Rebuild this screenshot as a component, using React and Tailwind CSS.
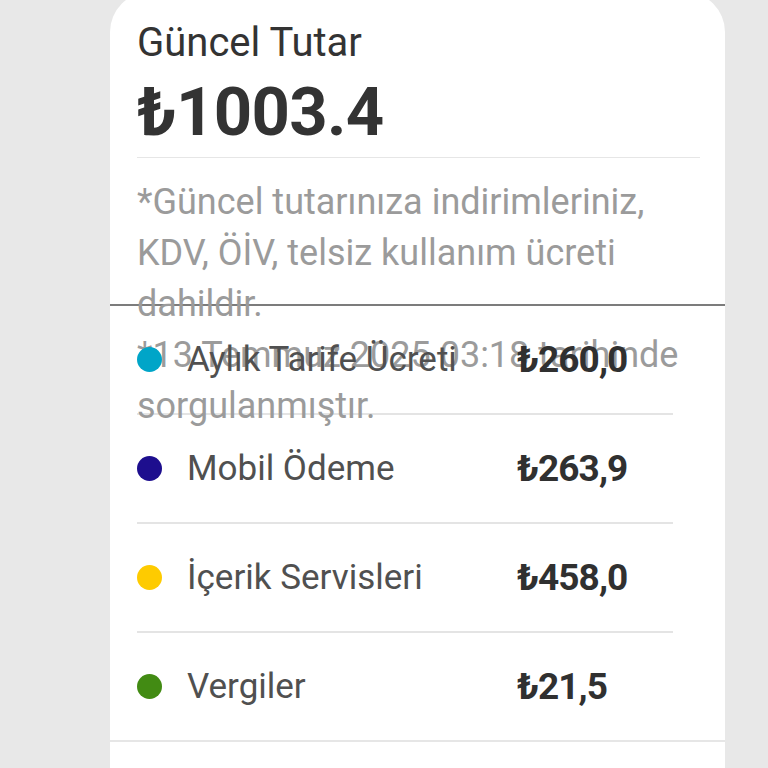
import React from 'react'

const items = [
  { label: 'Aylık Tarife Ücreti', amount: '₺260,0', color: 'bg-[#00a5c8]' },
  { label: 'Mobil Ödeme', amount: '₺263,9', color: 'bg-[#1d0e8e]' },
  { label: 'İçerik Servisleri', amount: '₺458,0', color: 'bg-[#fecb00]' },
  { label: 'Vergiler', amount: '₺21,5', color: 'bg-[#428b13]' },
]

function Row({ label, amount, color, last }) {
  return (
    <div className={`flex items-center ${last ? 'h-[107px]' : 'h-[109px] border-b-2 border-[#e4e4e4]'}`}>
      <span className={`w-[25px] h-[25px] rounded-full shrink-0 ${color}`} />
      <span className="flex-1 ml-[25px] text-[35px] text-[#505050] leading-none">{label}</span>
      <span className="w-[156px] text-[37px] font-bold text-[#303030] leading-none tracking-tight">{amount}</span>
    </div>
  )
}

export default function App() {
  return (
    <div className="h-[768px] overflow-hidden bg-[#e8e8e8] font-['Roboto','Noto_Sans',sans-serif]">
      <div className="ml-[110px] w-[615px] -mt-2 h-[776px] bg-white rounded-t-[40px]">
        <div className="pl-[27px] pr-[25px] pt-[27px]">
          <h2 className="text-[40px] leading-[48px] text-[#333]">Güncel Tutar</h2>
          <div className="mt-[9px] text-[67px] leading-[72px] font-bold text-[#333] tracking-[-0.01em]">₺1003.4</div>
          <div className="mt-[9px] h-px bg-[#e6e6e6]" />
          {/* fixed-height note box: its text spills under the list below */}
          <div className="h-[146px] pt-[19px] text-[36px] leading-[51px] text-[#9b9b9b]">
            <p>*Güncel tutarınıza indirimleriniz, KDV, ÖİV, telsiz kullanım ücreti dahildir.</p>
            <p>*13 Temmuz 2025 03:18 tarihinde sorgulanmıştır.</p>
          </div>
        </div>
        <div className="border-t-2 border-b-2 border-t-[#7c7c7c] border-b-[#e6e6e6]">
          <div className="pl-[27px] pr-[52px]">
            {items.map((it, i) => (
              <Row key={it.label} {...it} last={i === items.length - 1} />
            ))}
          </div>
        </div>
      </div>
    </div>
  )
}
